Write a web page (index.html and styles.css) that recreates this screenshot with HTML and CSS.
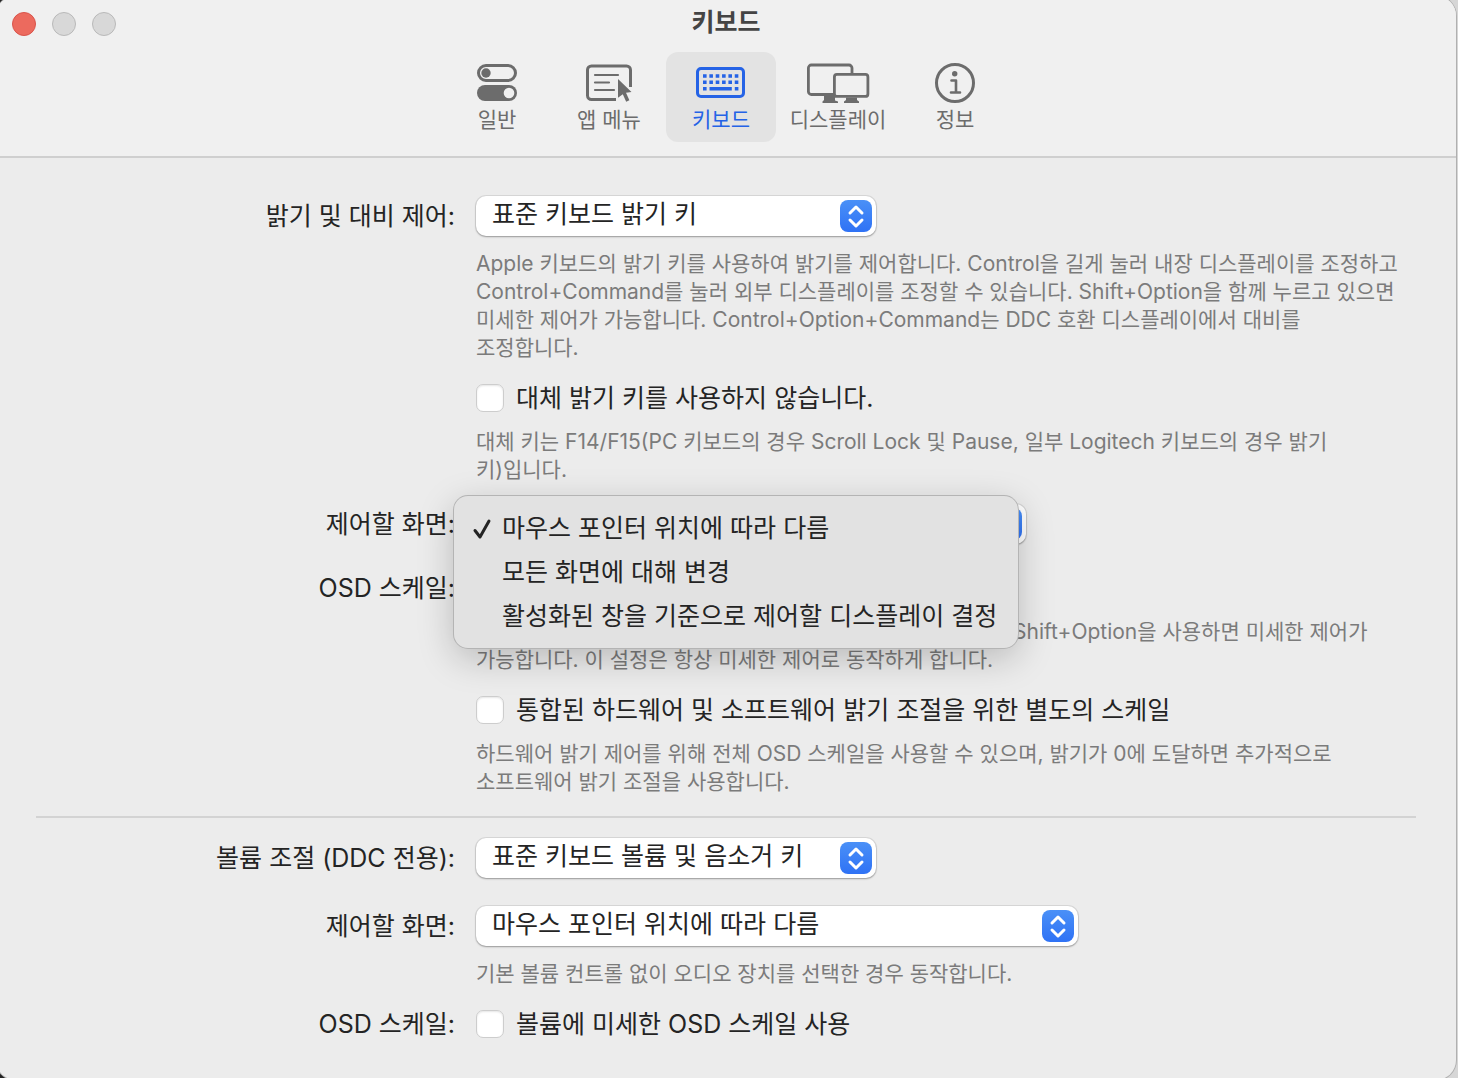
FILE: index.html
```html
<!DOCTYPE html>
<html lang="ko">
<head>
    <meta charset="UTF-8">
    <meta name="viewport" content="width=device-width, initial-scale=1.0">
    <title>키보드</title>
    <link rel="stylesheet" href="styles.css">
</head>
<body>
    <div class="window">
        <header class="header">
            <div class="titlebar">
                <div class="lights">
                    <button type="button" class="light close" aria-label="닫기"></button>
                    <button type="button" class="light" aria-label="최소화"></button>
                    <button type="button" class="light" aria-label="확대"></button>
                </div>
                <h1>키보드</h1>
            </div>
            <nav class="tabs">
                <button type="button" class="tab">
                    <svg viewBox="0 0 64 42" fill="none" stroke="currentColor" stroke-width="3">
                        <rect x="13.5" y="3.5" width="37" height="15" rx="7.5"/>
                        <circle cx="21" cy="11" r="4.7" fill="currentColor" stroke="none"/>
                        <rect x="12" y="23" width="40" height="16" rx="8" fill="currentColor" stroke="none"/>
                        <circle cx="44" cy="31" r="5.3" fill="#f0f0f0" stroke="none"/>
                    </svg>
                    <span>일반</span>
                </button>
                <button type="button" class="tab">
                    <svg viewBox="0 0 64 42" fill="none" stroke="currentColor" stroke-width="3">
                        <path d="M39 37.5H14.5a4 4 0 0 1-4-4V8a4 4 0 0 1 4-4h35a4 4 0 0 1 4 4v17"/>
                        <path d="M18 13h23M18 20.5h14M18 28h19" stroke-width="2.2" stroke-linecap="round"/>
                        <path d="M41 17l13.500 13-5.500.8 3.400 7.500-3.200 1.500-3.400-7.600-4.800 3.600z" fill="currentColor" stroke="none"/>
                    </svg>
                    <span>앱 메뉴</span>
                </button>
                <button type="button" class="tab active">
                    <svg viewBox="0 0 64 42" fill="none" stroke="currentColor" stroke-width="3">
                        <rect x="8.5" y="6.5" width="46" height="28" rx="3.5"/>
                        <path d="M14 14h35.4M14 20.3h35.4" stroke-width="3.6" stroke-dasharray="3.6 2.75"/>
                        <path d="M14 26.7h3.6M20.5 26.7h22.3M45.8 26.7h3.6" stroke-width="3.4"/>
                    </svg>
                    <span>키보드</span>
                </button>
                <button type="button" class="tab wide">
                    <svg viewBox="0 0 64 42" fill="none" stroke="currentColor" stroke-width="2.8">
                        <path d="M28 32.5H5.4a3 3 0 0 1-3-3V6a3 3 0 0 1 3-3H43a3 3 0 0 1 3 3v5.5"/>
                        <rect x="28.4" y="12.4" width="33.5" height="22" rx="2.5"/>
                        <path d="M18 33.5h11v5l3 1v1.500H16.500v-1.500L18 38zM40 35.500h11V38l2 1.500V41H38v-1.500l2-1.500z" fill="currentColor" stroke="none"/>
                    </svg>
                    <span>디스플레이</span>
                </button>
                <button type="button" class="tab">
                    <svg viewBox="0 0 64 42" fill="none" stroke="currentColor" stroke-width="3">
                        <circle cx="32" cy="21" r="18.5"/>
                        <circle cx="31.7" cy="11.7" r="2.7" fill="currentColor" stroke="none"/>
                        <path d="M28.5 18.5H33V30M28 30.5h9" stroke-width="2.6" stroke-linecap="round" stroke-linejoin="round"/>
                    </svg>
                    <span>정보</span>
                </button>
            </nav>
        </header>

        <main>
            <section class="settings">
                <div class="row">
                    <label class="name" for="brightness">밝기 및 대비 제어:</label>
                    <div class="select">
                        <select id="brightness">
                            <option>표준 키보드 밝기 키</option>
                        </select>
                        <svg class="arrows" viewBox="0 0 32 32"><path d="M10 13l6-6 6 6M10 20l6 6 6-6"/></svg>
                    </div>
                </div>
                <p class="hint after-select">Apple 키보드의 밝기 키를 사용하여 밝기를 제어합니다. Control을 길게 눌러 내장 디스플레이를 조정하고<br>
                    Control+Command를 눌러 외부 디스플레이를 조정할 수 있습니다. Shift+Option을 함께 누르고 있으면<br>
                    미세한 제어가 가능합니다. Control+Option+Command는 DDC 호환 디스플레이에서 대비를<br>
                    조정합니다.</p>
                <div class="row check-row">
                    <div class="check">
                        <input type="checkbox" id="alt_keys">
                        <label for="alt_keys">대체 밝기 키를 사용하지 않습니다.</label>
                    </div>
                </div>
                <p class="hint">대체 키는 F14/F15(PC 키보드의 경우 Scroll Lock 및 Pause, 일부 Logitech 키보드의 경우 밝기<br>
                    키)입니다.</p>
                <div class="row after-hint">
                    <label class="name" for="screen">제어할 화면:</label>
                    <div class="select large">
                        <select id="screen">
                            <option>마우스 포인터 위치에 따라 다름</option>
                        </select>
                        <svg class="arrows" viewBox="0 0 32 32"><path d="M10 13l6-6 6 6M10 20l6 6 6-6"/></svg>
                        <!-- open menu -->
                        <ul class="menu">
                            <li>
                                <svg viewBox="0 0 20 24"><path d="M3 13.5l5 6.500L17 4"/></svg>
                                <button type="button">마우스 포인터 위치에 따라 다름</button>
                            </li>
                            <li><button type="button">모든 화면에 대해 변경</button></li>
                            <li><button type="button">활성화된 창을 기준으로 제어할 디스플레이 결정</button></li>
                        </ul>
                    </div>
                </div>
                <div class="row osd-row">
                    <label class="name" for="osd">OSD 스케일:</label>
                    <div class="check">
                        <input type="checkbox" id="osd">
                    </div>
                </div>
                <p class="hint covered">Shift+Option을 사용하면 미세한 제어가<br>
                    가능합니다. 이 설정은 항상 미세한 제어로 동작하게 합니다.</p>
                <div class="row check-row">
                    <div class="check">
                        <input type="checkbox" id="separate">
                        <label for="separate">통합된 하드웨어 및 소프트웨어 밝기 조절을 위한 별도의 스케일</label>
                    </div>
                </div>
                <p class="hint">하드웨어 밝기 제어를 위해 전체 OSD 스케일을 사용할 수 있으며, 밝기가 0에 도달하면 추가적으로<br>
                    소프트웨어 밝기 조절을 사용합니다.</p>
            </section>

            <hr>

            <section class="settings">
                <div class="row">
                    <label class="name" for="volume">볼륨 조절 (DDC 전용):</label>
                    <div class="select">
                        <select id="volume">
                            <option>표준 키보드 볼륨 및 음소거 키</option>
                        </select>
                        <svg class="arrows" viewBox="0 0 32 32"><path d="M10 13l6-6 6 6M10 20l6 6 6-6"/></svg>
                    </div>
                </div>
                <div class="row after-row">
                    <label class="name" for="volume_screen">제어할 화면:</label>
                    <div class="select larger">
                        <select id="volume_screen">
                            <option>마우스 포인터 위치에 따라 다름</option>
                        </select>
                        <svg class="arrows" viewBox="0 0 32 32"><path d="M10 13l6-6 6 6M10 20l6 6 6-6"/></svg>
                    </div>
                </div>
                <p class="hint after-select">기본 볼륨 컨트롤 없이 오디오 장치를 선택한 경우 동작합니다.</p>
                <div class="row check-row">
                    <label class="name" for="volume_osd">OSD 스케일:</label>
                    <div class="check">
                        <input type="checkbox" id="volume_osd">
                        <label for="volume_osd">볼륨에 미세한 OSD 스케일 사용</label>
                    </div>
                </div>
            </section>
        </main>
    </div>
</body>
</html>
```
FILE: styles.css
```css
* {
    box-sizing: border-box;
}
body {
    margin: 0;
    overflow: hidden;
    font-family: Inter, "Noto Sans CJK KR", sans-serif;
    font-size: 25px;
    line-height: 28px;
    color: #242424;
    background: linear-gradient(to right, #222 50%, #d6d6d6 50%);
}
button, select, input {
    font: inherit;
    color: inherit;
    margin: 0;
}
.window {
    margin: -4px 2px -2px -4px;
    min-height: calc(100vh + 6px);
    background: #ececec;
    border-radius: 20px;
    box-shadow: 0 0 0 1px #b0b0b0;
    overflow: hidden;
}
.header {
    height: 162px;
    background: #f0f0f0;
    border-bottom: 2px solid #cfcfcf;
}
.titlebar {
    display: grid;
    grid-template-columns: 1fr auto 1fr;
    align-items: center;
    height: 56px;
}
.lights {
    display: flex;
    gap: 16px;
    padding-left: 16px;
}
.light {
    width: 24px;
    height: 24px;
    padding: 0;
    border: 1px solid #b9b9b9;
    border-radius: 50%;
    background: #d8d8d8;
}
.close {
    background: #ec6a5e;
    border-color: #d9544b;
}
h1 {
    margin: 0;
    padding-bottom: 4px;
    font-size: 25px;
    font-weight: 700;
    color: #444;
}
.tabs {
    display: flex;
    justify-content: center;
    gap: 2px;
}
.tab {
    display: flex;
    flex-direction: column;
    align-items: center;
    justify-content: flex-start;
    gap: 2px;
    width: 110px;
    height: 90px;
    padding: 10px 0 0;
    border: none;
    border-radius: 12px;
    background: none;
    font-size: 21px;
    line-height: 28px;
    white-space: nowrap;
    color: #6c6c6c;
}
.wide {
    width: 120px;
}
.active {
    background: #e3e3e3;
    color: #2563e6;
}
.tab svg {
    width: 64px;
    height: 42px;
}
main {
    padding: 38px 40px;
}
.settings {
    padding-left: 440px;
}
.row {
    display: flex;
    align-items: center;
}
.name {
    width: 440px;
    margin-left: -440px;
    padding-right: 21px;
    text-align: right;
    white-space: nowrap;
}
.select {
    position: relative;
    width: 400px;
    height: 40px;
}
.large {
    width: 550px;
}
.larger {
    width: 602px;
}
select {
    display: block;
    appearance: none;
    width: 100%;
    height: 40px;
    padding: 0 40px 4px 16px;
    border: none;
    border-radius: 10px;
    background: #fff;
    box-shadow: 0 0 0 1px rgba(0, 0, 0, 0.08), 0 1px 2px rgba(0, 0, 0, 0.3);
}
.arrows {
    position: absolute;
    top: 4px;
    right: 4px;
    width: 32px;
    height: 32px;
    border-radius: 8px;
    background: linear-gradient(#4a90f7, #2f72f5);
    fill: none;
    stroke: #fff;
    stroke-width: 3;
    stroke-linecap: round;
    stroke-linejoin: round;
    pointer-events: none;
}
.hint {
    margin: 16px 0 0;
    font-size: 21px;
    line-height: 28px;
    white-space: nowrap;
    color: #7b7b7b;
}
.after-select {
    margin-top: 14px;
}
/* the start of this line sits under the open menu */
.covered {
    text-indent: 537px;
}
.check-row {
    margin-top: 22px;
}
.after-hint {
    margin-top: 20px;
}
.after-row {
    margin-top: 28px;
}
.osd-row {
    margin-top: 30px;
}
.check {
    display: flex;
    align-items: center;
    gap: 12px;
    white-space: nowrap;
}
input[type="checkbox"] {
    appearance: none;
    width: 28px;
    height: 28px;
    border: 1px solid #cdcdcd;
    border-radius: 7px;
    background: #fff;
    box-shadow: inset 0 1px 2px rgba(0, 0, 0, 0.1);
}
.menu {
    position: absolute;
    z-index: 1;
    top: -8px;
    left: -22px;
    width: 564px;
    margin: 0;
    padding: 10px 0;
    list-style: none;
    border-radius: 14px;
    background: #e2e2e2;
    box-shadow: 0 0 0 1px #b4b4b4, 0 10px 36px rgba(0, 0, 0, 0.22);
}
.menu li {
    position: relative;
    height: 44px;
    padding-left: 48px;
}
.menu button {
    width: 100%;
    height: 44px;
    padding: 0;
    border: none;
    background: none;
    text-align: left;
    white-space: nowrap;
}
.menu svg {
    position: absolute;
    top: 11px;
    left: 18px;
    width: 20px;
    height: 24px;
    fill: none;
    stroke: #242424;
    stroke-width: 3;
    stroke-linecap: round;
    stroke-linejoin: round;
}
hr {
    height: 2px;
    margin: 20px 0;
    border: none;
    background: #d3d3d3;
}
```
